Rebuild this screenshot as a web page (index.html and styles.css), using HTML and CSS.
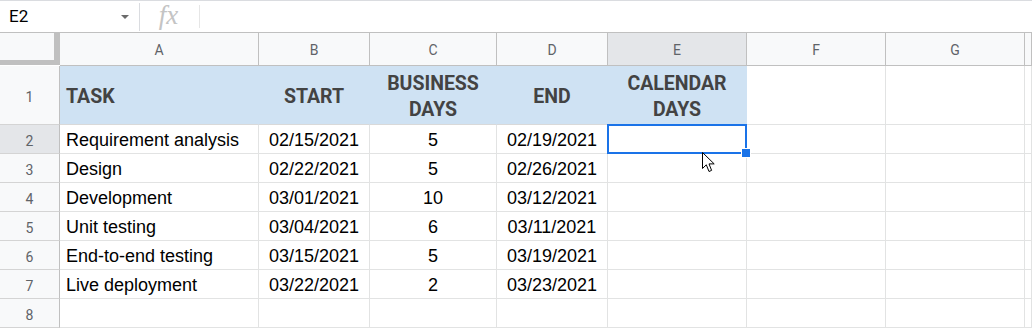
FILE: index.html
```html
<!DOCTYPE html>
<html lang="en">
<head>
    <meta charset="UTF-8">
    <title>Sheet</title>
    <link rel="stylesheet" href="styles.css">
</head>
<body>
    <!-- Formula bar -->
    <div class="formula-bar">
        <div class="name-box">
            <span class="cell-ref">E2</span>
            <span class="caret"></span>
        </div>
        <div class="divider"></div>
        <div class="fx">fx</div>
        <div class="divider short"></div>
        <div class="formula-input"></div>
    </div>

    <!-- Grid -->
    <div class="sheet">
        <div class="corner"></div>
        <div class="col-head">A</div>
        <div class="col-head">B</div>
        <div class="col-head">C</div>
        <div class="col-head">D</div>
        <div class="col-head selected">E</div>
        <div class="col-head">F</div>
        <div class="col-head">G</div>
        <div class="col-head"></div>

        <div class="row-head">1</div>
        <div class="head-cell left">TASK</div>
        <div class="head-cell">START</div>
        <div class="head-cell">BUSINESS<br>DAYS</div>
        <div class="head-cell">END</div>
        <div class="head-cell">CALENDAR<br>DAYS</div>
        <div class="cell"></div>
        <div class="cell"></div>
        <div class="cell"></div>

        <div class="row-head selected">2</div>
        <div class="cell">Requirement analysis</div>
        <div class="cell center">02/15/2021</div>
        <div class="cell center">5</div>
        <div class="cell center">02/19/2021</div>
        <div class="cell active"><span class="fill-handle"></span></div>
        <div class="cell"></div>
        <div class="cell"></div>
        <div class="cell"></div>

        <div class="row-head">3</div>
        <div class="cell">Design</div>
        <div class="cell center">02/22/2021</div>
        <div class="cell center">5</div>
        <div class="cell center">02/26/2021</div>
        <div class="cell"></div>
        <div class="cell"></div>
        <div class="cell"></div>
        <div class="cell"></div>

        <div class="row-head">4</div>
        <div class="cell">Development</div>
        <div class="cell center">03/01/2021</div>
        <div class="cell center">10</div>
        <div class="cell center">03/12/2021</div>
        <div class="cell"></div>
        <div class="cell"></div>
        <div class="cell"></div>
        <div class="cell"></div>

        <div class="row-head">5</div>
        <div class="cell">Unit testing</div>
        <div class="cell center">03/04/2021</div>
        <div class="cell center">6</div>
        <div class="cell center">03/11/2021</div>
        <div class="cell"></div>
        <div class="cell"></div>
        <div class="cell"></div>
        <div class="cell"></div>

        <div class="row-head">6</div>
        <div class="cell">End-to-end testing</div>
        <div class="cell center">03/15/2021</div>
        <div class="cell center">5</div>
        <div class="cell center">03/19/2021</div>
        <div class="cell"></div>
        <div class="cell"></div>
        <div class="cell"></div>
        <div class="cell"></div>

        <div class="row-head">7</div>
        <div class="cell">Live deployment</div>
        <div class="cell center">03/22/2021</div>
        <div class="cell center">2</div>
        <div class="cell center">03/23/2021</div>
        <div class="cell"></div>
        <div class="cell"></div>
        <div class="cell"></div>
        <div class="cell"></div>

        <div class="row-head">8</div>
        <div class="cell"></div>
        <div class="cell"></div>
        <div class="cell"></div>
        <div class="cell"></div>
        <div class="cell"></div>
        <div class="cell"></div>
        <div class="cell"></div>
        <div class="cell"></div>
    </div>

    <!-- Mouse pointer -->
    <svg class="pointer" width="14" height="22" viewBox="0 0 14 22">
        <path d="M0.5 0.5 L0.5 16.5 L4.3 12.8 L7 19.5 L9.6 18.4 L7 11.9 L12.2 11.9 Z" fill="#fff" stroke="#000" stroke-width="1" stroke-linejoin="round"/>
    </svg>
</body>
</html>
```

FILE: styles.css
```css
body {
    margin: 0;
    padding: 0;
    background: #ffffff;
    font-family: 'Liberation Sans', Arial, sans-serif;
    position: relative;
    width: 1032px;
    height: 328px;
    overflow: hidden;
}
.formula-bar {
    height: 33px;
    box-sizing: border-box;
    border-top: 1px solid #dadce0;
    border-bottom: 1px solid #c0c0c0;
    display: flex;
    align-items: center;
}
.name-box {
    width: 139px;
    height: 100%;
    box-sizing: border-box;
    padding: 0 10px 0 9px;
    display: flex;
    align-items: center;
    justify-content: space-between;
}
.cell-ref {
    font-family: 'Roboto', sans-serif;
    font-size: 17px;
    color: #000;
    padding-bottom: 2px;
}
.caret {
    width: 0;
    height: 0;
    border-left: 4px solid transparent;
    border-right: 4px solid transparent;
    border-top: 4px solid #6b6b6b;
}
.divider {
    width: 1px;
    height: 28px;
    background: #dadce0;
}
.divider.short {
    height: 23px;
    background: #e6e6e6;
}
.fx {
    width: 59px;
    text-align: center;
    font-family: 'Liberation Serif', serif;
    font-style: italic;
    font-size: 27px;
    color: #c4c4c4;
    padding-bottom: 3px;
    box-sizing: border-box;
    padding-right: 2px;
}
.formula-input {
    flex: 1;
}
.sheet {
    display: grid;
    grid-template-columns: 60px 199px 111px 127px 111px 139px 139px 139px 1fr;
    grid-template-rows: 33px 59px repeat(7, 29px);
}
.corner {
    background: #f8f9fa;
    border-right: 6px solid #c0c0c0;
    border-bottom: 5px solid #c0c0c0;
    margin-bottom: 1px;
}
.col-head {
    background: #f8f9fa;
    border-right: 1px solid #c0c0c0;
    border-bottom: 1px solid #c0c0c0;
    display: flex;
    align-items: center;
    justify-content: center;
    font-family: 'Roboto', sans-serif;
    font-size: 14px;
    color: #5f6368;
    padding-top: 1px;
}
.col-head.selected {
    background: #e4e6e9;
}
.row-head {
    background: #f8f9fa;
    border-right: 1px solid #c0c0c0;
    border-bottom: 1px solid #d4d4d4;
    display: flex;
    align-items: center;
    justify-content: center;
    font-family: 'Roboto', sans-serif;
    font-size: 14px;
    color: #5f6368;
    padding-top: 3px;
}
.row-head.selected {
    background: #e4e6e9;
}
.head-cell {
    background: #cfe2f3;
    border-right: 1px solid #cfe2f3;
    border-bottom: 1px solid #d9d9d9;
    display: flex;
    align-items: center;
    justify-content: center;
    text-align: center;
    font-family: 'Roboto', sans-serif;
    font-weight: bold;
    font-size: 19.5px;
    line-height: 26px;
    color: #434343;
    padding-top: 3px;
}
.head-cell.left {
    justify-content: flex-start;
    padding-left: 6px;
}
.cell {
    border-right: 1px solid #e2e3e3;
    border-bottom: 1px solid #e2e3e3;
    display: flex;
    align-items: center;
    padding-left: 6px;
    font-size: 18px;
    color: #000;
    white-space: nowrap;
    padding-top: 3px;
}
.cell.center {
    justify-content: center;
    padding-left: 0;
}
.cell.active {
    position: relative;
}
.cell.active::before {
    content: '';
    position: absolute;
    left: -1px;
    top: -1px;
    right: -1px;
    bottom: -1px;
    border: 2px solid #1a73e8;
}
.fill-handle {
    position: absolute;
    right: -5px;
    bottom: -5px;
    width: 8px;
    height: 8px;
    background: #1a73e8;
    border: 1px solid #ffffff;
}
.pointer {
    position: absolute;
    left: 702px;
    top: 152px;
}
```
